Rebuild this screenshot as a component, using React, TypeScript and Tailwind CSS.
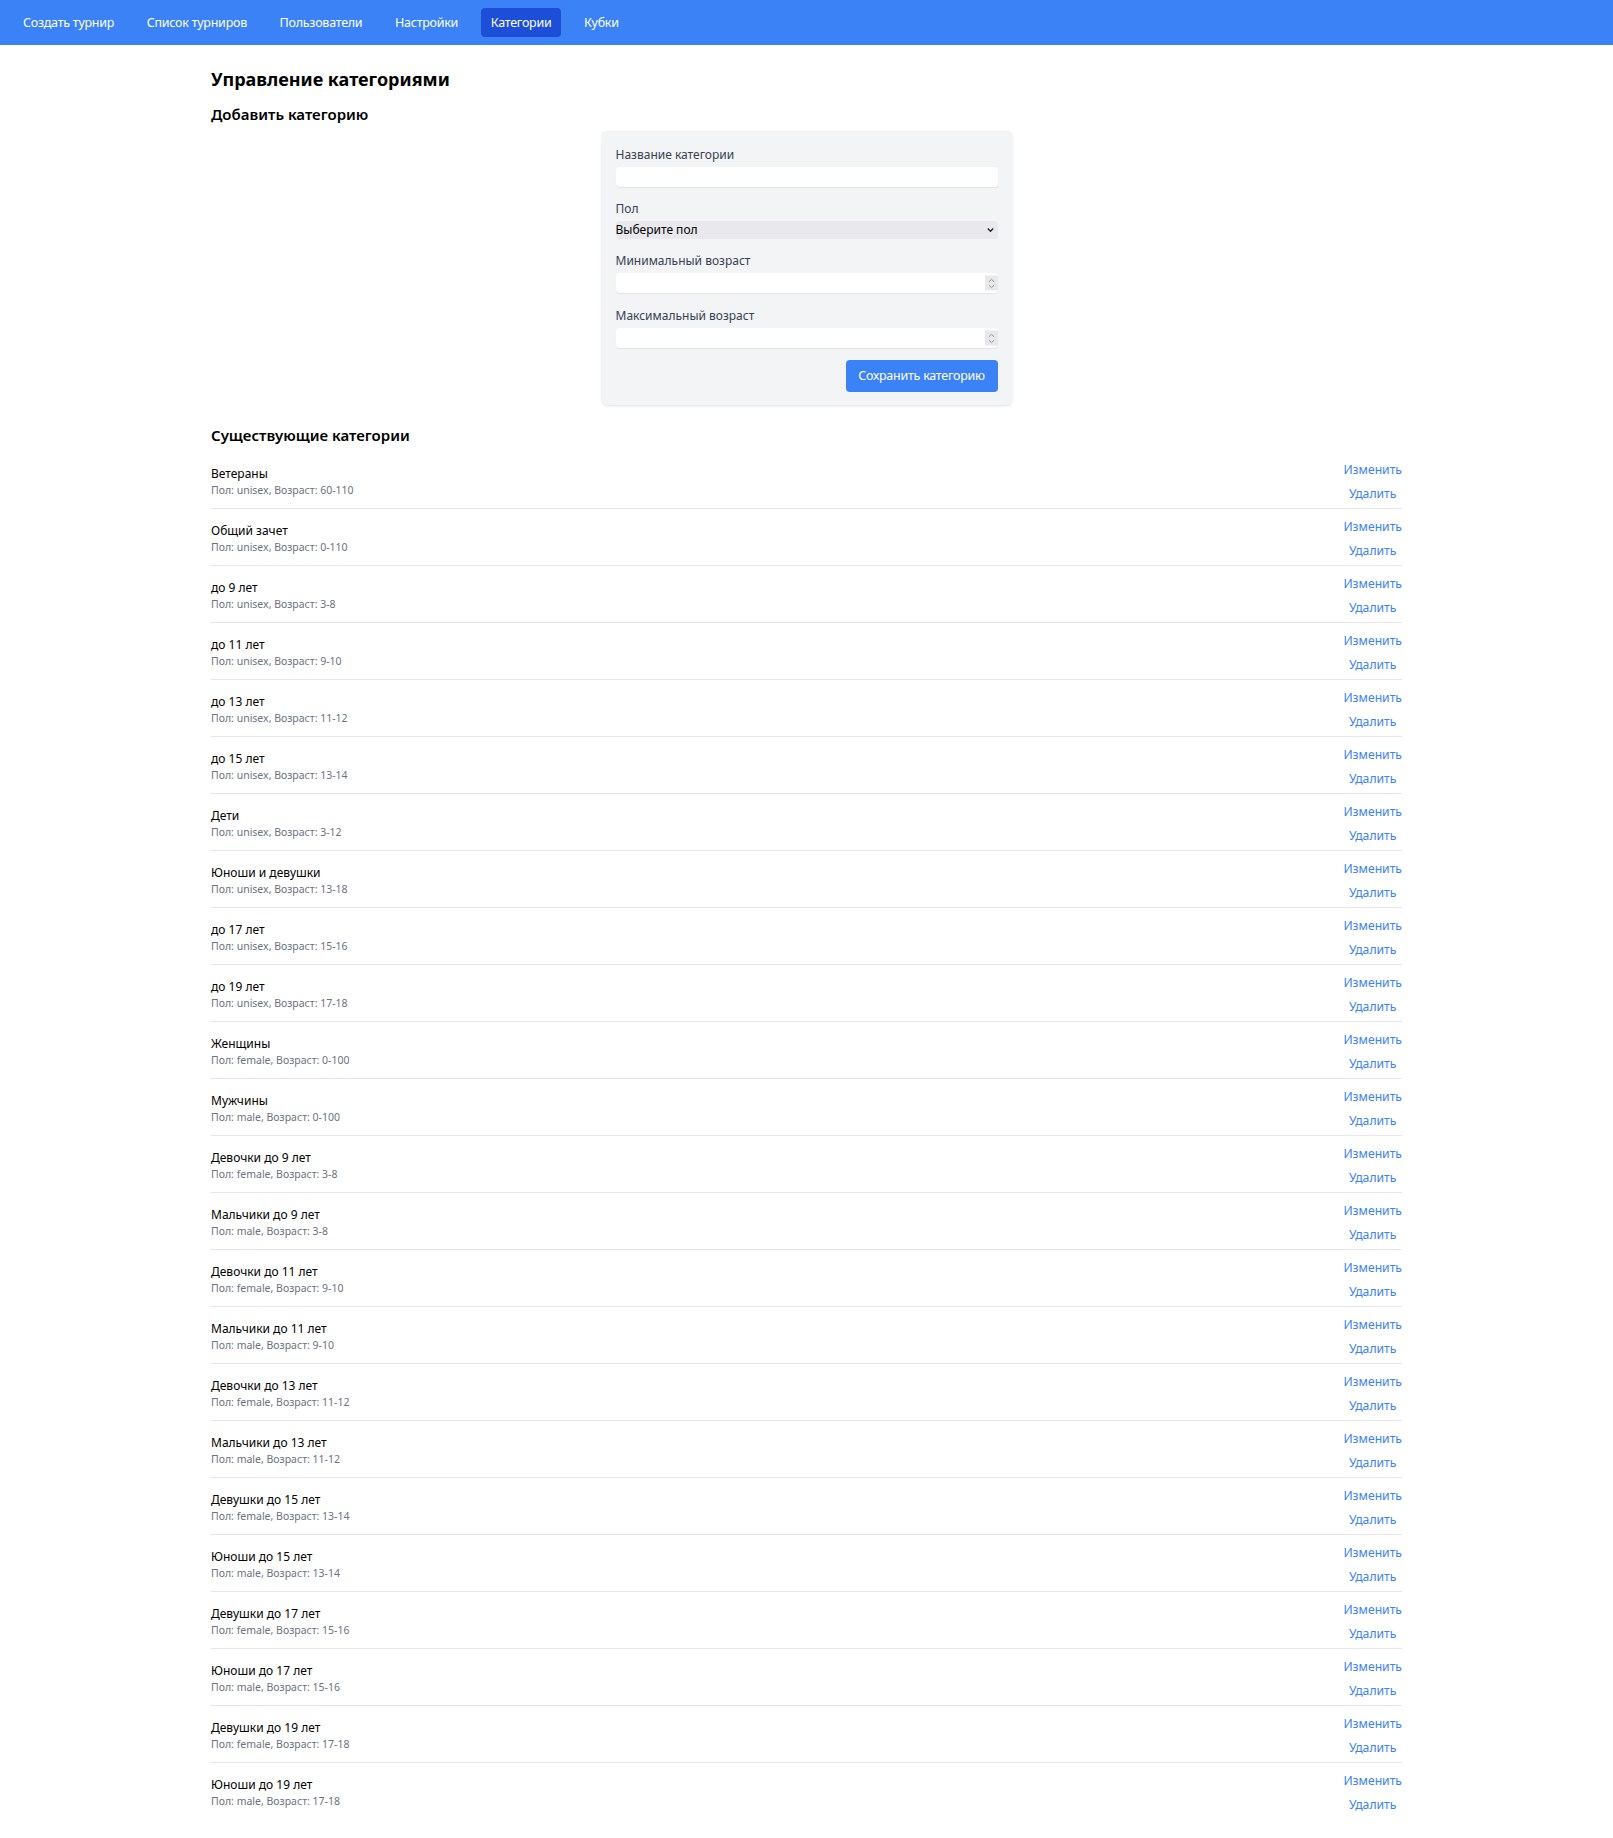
import React from "react";

const navItems = [
  "Создать турнир",
  "Список турниров",
  "Пользователи",
  "Настройки",
  "Категории",
  "Кубки",
];

const categories: [string, string, string][] = [
  ["Ветераны", "unisex", "60-110"],
  ["Общий зачет", "unisex", "0-110"],
  ["до 9 лет", "unisex", "3-8"],
  ["до 11 лет", "unisex", "9-10"],
  ["до 13 лет", "unisex", "11-12"],
  ["до 15 лет", "unisex", "13-14"],
  ["Дети", "unisex", "3-12"],
  ["Юноши и девушки", "unisex", "13-18"],
  ["до 17 лет", "unisex", "15-16"],
  ["до 19 лет", "unisex", "17-18"],
  ["Женщины", "female", "0-100"],
  ["Мужчины", "male", "0-100"],
  ["Девочки до 9 лет", "female", "3-8"],
  ["Мальчики до 9 лет", "male", "3-8"],
  ["Девочки до 11 лет", "female", "9-10"],
  ["Мальчики до 11 лет", "male", "9-10"],
  ["Девочки до 13 лет", "female", "11-12"],
  ["Мальчики до 13 лет", "male", "11-12"],
  ["Девушки до 15 лет", "female", "13-14"],
  ["Юноши до 15 лет", "male", "13-14"],
  ["Девушки до 17 лет", "female", "15-16"],
  ["Юноши до 17 лет", "male", "15-16"],
  ["Девушки до 19 лет", "female", "17-18"],
  ["Юноши до 19 лет", "male", "17-18"],
];

function Spinner() {
  return (
    <div className="absolute right-0 top-1/2 -translate-y-1/2 w-[13px] h-[15px] bg-[#e9e9ed] flex flex-col items-center justify-center gap-[2px]">
      <svg width="7" height="4" viewBox="0 0 7 4" fill="none">
        <path d="M0.8 3.4 L3.5 0.8 L6.2 3.4" stroke="#8a8a8a" strokeWidth="0.9" />
      </svg>
      <svg width="7" height="4" viewBox="0 0 7 4" fill="none">
        <path d="M0.8 0.6 L3.5 3.2 L6.2 0.6" stroke="#8a8a8a" strokeWidth="0.9" />
      </svg>
    </div>
  );
}

function NumberField() {
  return (
    <div className="relative h-[20px] w-full bg-white rounded-[4px] shadow-[0_1px_1px_rgba(0,0,0,0.07)]">
      <input type="text" className="h-full w-full bg-transparent outline-none pr-[16px] text-[12px]" />
      <Spinner />
    </div>
  );
}

function Label({ children }: { children: React.ReactNode }) {
  return <div className="text-[12px] leading-[16px] text-[#374151] mb-[4px]">{children}</div>;
}

export default function App() {
  return (
    <div className="min-h-screen bg-white font-['Noto_Sans',sans-serif] text-black">
      <nav className="h-[45px] bg-[#3b82f6] flex items-center px-[13px] gap-[12.6px]">
        {navItems.map((item) => (
          <div
            key={item}
            className={
              item === "Категории"
                ? "h-[29px] px-[10px] pt-[2px] rounded-[4px] bg-[#1d4ed8] flex items-center text-white text-[12.5px] tracking-[-0.25px]"
                : "h-[29px] px-[10px] pt-[2px] rounded-[4px] flex items-center text-white text-[12.5px] tracking-[-0.25px]"
            }
          >
            {item}
          </div>
        ))}
      </nav>

      <main className="w-[1191px] mx-auto pb-[19px]">
        <h1 className="mt-[22px] text-[18px] leading-[24px] font-bold">Управление категориями</h1>
        <h2 className="mt-[13px] text-[15px] leading-[20px] font-semibold">Добавить категорию</h2>

        <div className="mt-[7px] mx-auto w-[410px] bg-[#f3f4f6] rounded-[5px] shadow-[0_1px_3px_rgba(0,0,0,0.12)] pt-[16px] px-[14px] pb-[13px]">
          <div className="mb-[14px]">
            <Label>Название категории</Label>
            <div className="h-[20px] w-full bg-white rounded-[4px] shadow-[0_1px_1px_rgba(0,0,0,0.07)]">
              <input type="text" className="h-full w-full bg-transparent outline-none text-[12px]" />
            </div>
          </div>
          <div className="mb-[14px]">
            <Label>Пол</Label>
            <div className="relative h-[18px] w-full bg-[#e9e9ed] rounded-[4px] flex items-center text-[12px] leading-[16px] text-black">
              <span>Выберите пол</span>
              <svg
                className="absolute right-[4px] top-1/2 -translate-y-1/2 pointer-events-none"
                width="7"
                height="5"
                viewBox="0 0 7 5"
                fill="none"
              >
                <path d="M0.8 1 L3.5 3.8 L6.2 1" stroke="#222" strokeWidth="1.3" />
              </svg>
            </div>
          </div>
          <div className="mb-[15px]">
            <Label>Минимальный возраст</Label>
            <NumberField />
          </div>
          <div className="mb-[12px]">
            <Label>Максимальный возраст</Label>
            <NumberField />
          </div>
          <div className="flex justify-end">
            <button className="w-[152px] h-[32px] rounded-[4px] bg-[#3b82f6] text-white text-[12.5px] tracking-[-0.25px]">
              Сохранить категорию
            </button>
          </div>
        </div>

        <h2 className="mt-[20px] text-[15px] leading-[20px] font-semibold">Существующие категории</h2>

        <div className="mt-[7px] divide-y divide-[#e5e7eb]">
          {categories.map(([name, sex, age]) => (
            <div key={name} className="h-[57px] flex justify-between items-start">
              <div className="pt-[14px]">
                <div className="text-[12px] leading-[16px] text-black">{name}</div>
                <div className="text-[10.5px] leading-[16px] text-[#6b7280]">
                  Пол: {sex}, Возраст: {age}
                </div>
              </div>
              <div className="pt-[8px] flex flex-col gap-[4px]">
                <button className="text-[12.2px] leading-[20px] text-[#3b82f6]">Изменить</button>
                <button className="text-[12.2px] leading-[20px] text-[#3b82f6]">Удалить</button>
              </div>
            </div>
          ))}
        </div>
      </main>
    </div>
  );
}
